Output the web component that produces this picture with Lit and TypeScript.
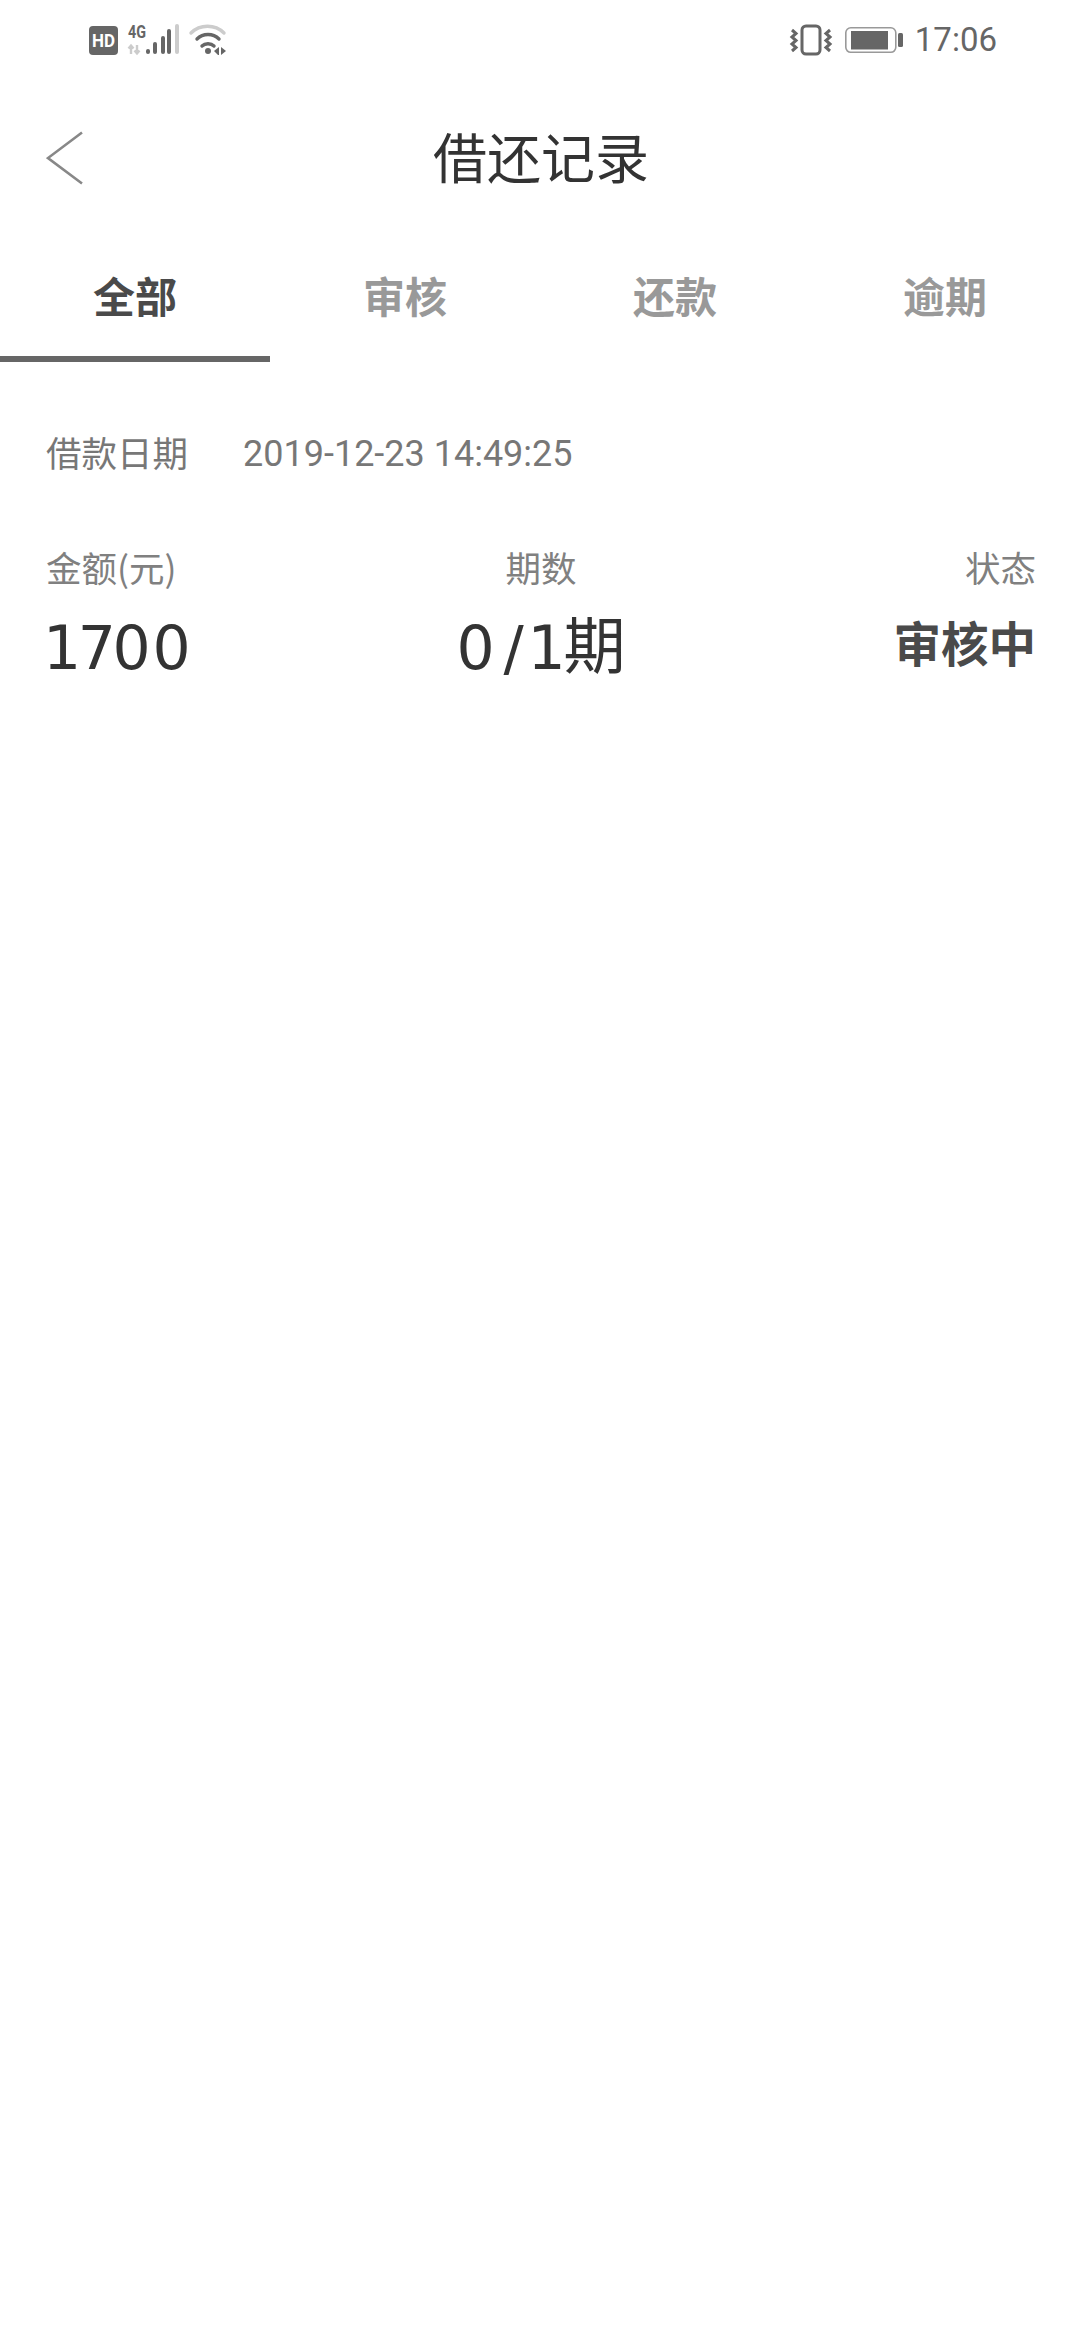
import { LitElement, html, css, svg } from "lit";
import { customElement } from "lit/decorators.js";

const hd = html`<svg class="ico" width="29" height="29" viewBox="0 0 29 29"><rect width="29" height="29" rx="4" fill="#666"/><text x="14.5" y="21" text-anchor="middle" font-family="Roboto" font-weight="700" font-size="19" fill="#fff" textLength="23" lengthAdjust="spacingAndGlyphs">HD</text></svg>`;

const signal = html`<svg class="ico" width="56" height="34" viewBox="0 0 56 34">
  <text x="3" y="15" font-family="Roboto" font-weight="700" font-size="18" fill="#666" textLength="18" lengthAdjust="spacingAndGlyphs">4G</text>
  <path d="M6 31v-8M3.5 25.5 6 22.5l2.5 3M12 22v8M9.5 27.5 12 30.5l2.5-3" stroke="#ccc" stroke-width="2.400" fill="none"/>
  ${[[21, 5], [28, 12], [36, 18], [42, 25]].map(([x, h]) => svg`<rect x="${x}" y="${31 - h}" width="4" height="${h}" rx="2" fill="#666"/>`)}
  <rect x="50" y="1" width="4" height="30" rx="2" fill="#ccc"/>
</svg>`;

const wifi = html`<svg class="ico" width="42" height="40" viewBox="0 0 42 40">
  <path d="M3 13C12 4 27 4 36 13" stroke="#ccc" stroke-width="3.400" fill="none" stroke-linecap="round"/>
  <path d="M9 19C15 13 25 13 31 19" stroke="#666" stroke-width="3.400" fill="none" stroke-linecap="round"/>
  <path d="M14 26C17 23 23 23 26 26" stroke="#666" stroke-width="3.400" fill="none" stroke-linecap="round"/>
  <circle cx="20" cy="31" r="3" fill="#666"/>
  <path d="M31 27v8h-1l-4-4zM33 27v8l5-4z" fill="#666"/>
</svg>`;

const vibrate = html`<svg class="ico" width="44" height="36" viewBox="0 0 44 36">
  <rect x="13" y="4" width="18" height="28" rx="4" fill="none" stroke="#666" stroke-width="3"/>
  <path d="M3 8 7 11.500 3 15 7 18.500 3 22 7 25.500 3 29M41 8 37 11.500 41 15 37 18.500 41 22 37 25.500 41 29" fill="none" stroke="#666" stroke-width="3"/>
</svg>`;

const battery = html`<svg class="ico" width="62" height="30" viewBox="0 0 62 30">
  <rect x="2.800" y="2.800" width="50" height="24.500" rx="5" fill="none" stroke="#999" stroke-width="1.600"/>
  <rect x="8" y="6" width="37" height="18.500" fill="#666"/>
  <rect x="55" y="8" width="5" height="14" rx="1.500" fill="#666"/>
</svg>`;

const chevron = html`<svg class="back" width="38" height="54" viewBox="0 0 38 54"><path d="M36 1.500 2 27l34 25.500" fill="none" stroke="#888" stroke-width="2.600"/></svg>`;

@customElement("app-root")
export class AppRoot extends LitElement {
  static styles = css`
    :host { display: block; width: 1080px; min-height: 2340px; background: #fff; font-family: "Noto Sans CJK SC", "Liberation Sans", sans-serif; }
    .status { height: 80px; padding: 0 83px 0 89px; display: flex; align-items: center; justify-content: space-between; box-sizing: border-box; }
    .cluster { display: flex; align-items: center; }
    .left { gap: 7px; }
    .right { gap: 10px; }
    .ico { display: block; flex: none; }
    .time { font: 400 33px/42px Roboto, sans-serif; color: #666; }
    .nav { height: 156px; padding: 0 46px; display: grid; grid-template-columns: 1fr auto 1fr; align-items: center; }
    .back { display: block; }
    .title { font-size: 54px; line-height: 70px; color: #333; margin: -5px 0 0 2px; }
    .tabs { display: grid; grid-template-columns: repeat(4, 1fr); height: 126px; }
    .tab { box-sizing: border-box; padding-top: 31px; text-align: center; font-size: 42px; line-height: 56px; font-weight: 700; color: #999; }
    .tab.active { color: #4a4a4a; border-bottom: 6px solid #666; }
    .date { margin-top: 65px; padding: 0 46px; display: flex; gap: 55px; font-size: 35.500px; line-height: 50px; color: #777; }
    .date .when { font-family: Roboto, sans-serif; font-size: 36px; padding-top: 2px; }
    .cols { margin-top: 63px; padding: 0 44px 0 46px; display: grid; grid-template-columns: repeat(3, 1fr); }
    .col { display: flex; flex-direction: column; gap: 10px; }
    .mid { text-align: center; }
    .end { text-align: right; }
    .label { font-size: 35.500px; line-height: 50px; color: #808080; }
    .value { font-size: 62px; line-height: 80px; color: #333; white-space: nowrap; }
    .num { font-family: "DejaVu Sans", sans-serif; font-size: 60px; letter-spacing: 1.800px; }
    .tight { letter-spacing: -3.400px; }
    .lead { margin-left: -3px; }
    .slash { margin: 0 2px 0 7px; }
    .unit { margin-left: -4px; }
    .state { font-size: 47.500px; font-weight: 700; color: #4a4a4a; }
  `;

  render() {
    return html`
      <div class="status">
        <div class="cluster left">${hd}${signal}${wifi}</div>
        <div class="cluster right">${vibrate}${battery}<span class="time">17:06</span></div>
      </div>
      <div class="nav">${chevron}<div class="title">借还记录</div><span></span></div>
      <div class="tabs">
        <div class="tab active">全部</div>
        <div class="tab">审核</div>
        <div class="tab">还款</div>
        <div class="tab">逾期</div>
      </div>
      <div class="date"><span>借款日期</span><span class="when">2019-12-23 14:49:25</span></div>
      <div class="cols">
        <div class="col"><div class="label">金额(元)</div><div class="value"><span class="num lead"><span class="tight">17</span>00</span></div></div>
        <div class="col mid"><div class="label">期数</div><div class="value"><span class="num">0<span class="slash">/</span>1</span><span class="unit">期</span></div></div>
        <div class="col end"><div class="label">状态</div><div class="value state">审核中</div></div>
      </div>
    `;
  }
}
